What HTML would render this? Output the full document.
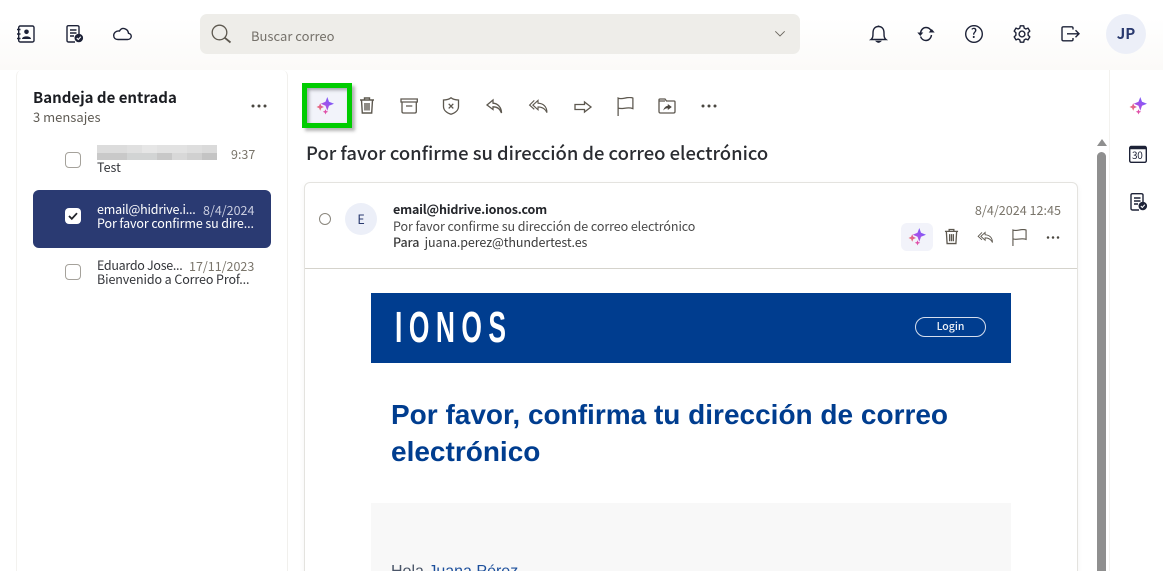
<!DOCTYPE html>
<html lang="es"><head><meta charset="utf-8"><title>Correo</title>
<style>
html,body{margin:0;padding:0;width:1163px;height:571px;overflow:hidden;background:#fff}
body{font-family:"Noto Sans CJK SC","Liberation Sans",sans-serif;color:#22242a;position:relative}
.a{position:absolute;white-space:nowrap;line-height:1}
svg{position:absolute;overflow:visible;fill:none}
.k{stroke:#1d2237;stroke-width:1.4}
.g{stroke:#5d584f;stroke-width:1.3}
.t{letter-spacing:-.1px}
</style></head><body>
<svg width="0" height="0" style="position:absolute"><defs>
<linearGradient id="sp" x1="0" y1="1" x2="1" y2="0"><stop offset="0" stop-color="#c94fd0"/><stop offset=".5" stop-color="#9a52ee"/><stop offset="1" stop-color="#5f62ff"/></linearGradient>
<linearGradient id="sq" x1="0" y1="1" x2="1" y2="0"><stop offset="0" stop-color="#ee7a6a"/><stop offset="1" stop-color="#d94fa8"/></linearGradient>
<symbol id="spark" viewBox="0 0 18 18"><path fill="url(#sp)" d="M11.300 0L13 4.700 18 6.800 13 8.800 11.300 13.800 9.500 8.800 4.700 6.800 9.500 4.700Z"/><path fill="url(#sq)" d="M4.200 6.300L5.300 8.800 8 10 5.300 11.100 4.200 13.800 3.100 11.100 .5 10 3.100 8.800Z"/><path fill="#e04fa8" d="M9.500 12.200L10.300 14 12.200 14.800 10.300 15.600 9.500 17.500 8.700 15.600 6.800 14.800 8.700 14Z"/></symbol>
<symbol id="trash" viewBox="0 0 16 18"><path d="M1 3.500H15M5.500 3.500V1.500H10.500V3.500M2.500 3.500L3.300 16.500H12.700L13.500 3.500M6 6.500V14M8 6.500V14M10 6.500V14" stroke="#5d584f" stroke-width="1.400" fill="none"/></symbol>
<symbol id="flag" viewBox="0 0 16 18"><path d="M1 18V1C5 3 10 -1 15 1V11C10 9 5 12 1 10.500" stroke="#5d584f" stroke-width="1.200" fill="none"/></symbol>
<symbol id="rall" viewBox="0 0 22 16"><path d="M6.500 1.500L1.500 6.500 6.500 11M10.500 1.500L5 6.500 10.500 11.500V8.500C15 8.500 18 10 20 14.500 20 8 16 4.700 10.500 4.500Z" stroke="#5d584f" stroke-width="1.200" fill="none"/></symbol>
</defs></svg>

<!-- top bar -->
<div class="a" style="left:0;top:0;width:1163px;height:70px;background:linear-gradient(#fff 25%,#fbfaf8)"></div>
<svg style="left:17px;top:25px" width="18" height="18" viewBox="0 0 18 18"><rect x="1.700" y="1" width="15.300" height="16" rx="1.500" class="k" stroke-width="1.600"/><circle cx="9.500" cy="6.800" r="2.300" fill="#1d2237"/><path d="M5 14C5 10.500 14 10.500 14 14Z" fill="#1d2237"/><path d="M0 4.500H3.500M0 9H3.500M0 13.500H3.500" stroke="#1d2237" stroke-width="1.500"/></svg>
<svg style="left:66px;top:25px" width="18" height="18" viewBox="0 0 18 18"><path d="M9 17H2.500Q1 17 1 15.500V2Q1 .7 2.500 .7H11Q13 .7 13 2V9" class="k"/><path d="M4 5H10.500M4 8H10.500M4 11H8" class="k"/><circle cx="12.800" cy="13" r="4.300" fill="#1d2237"/><path d="M10.800 13L12.300 14.500 14.800 11.800" stroke="#fff" stroke-width="1.100"/></svg>
<svg style="left:113px;top:26px" width="19" height="15" viewBox="0 0 19 15"><path d="M5 13.500H14.500C19 13.500 19.500 8 15.500 7.300 14.800 2.500 9 .5 6.500 5 3 4.500 .7 7 .7 9.500 .7 12 2.500 13.500 5 13.500Z" class="k" stroke-width="1.100"/></svg>
<div class="a" style="left:200px;top:14px;width:600px;height:40px;background:#eeede9;border-radius:7px"></div>
<svg style="left:211px;top:24px" width="20" height="20" viewBox="0 0 20 20"><circle cx="8.500" cy="8.500" r="7.300" stroke="#5d584f" stroke-width="1.300"/><path d="M13.800 13.800L19.500 18.500" stroke="#5d584f" stroke-width="1.800"/></svg>
<div class="a" style="left:251px;top:29px;font-size:13px;color:#75716a">Buscar correo</div>
<svg style="left:775px;top:31px" width="10" height="6" viewBox="0 0 10 6"><path d="M.3 .3L5 5 9.700 .3" stroke="#6b675f" stroke-width=".9"/></svg>
<svg style="left:870px;top:25px" width="17" height="19" viewBox="0 0 17 19"><path d="M1 14.500C3 13 3 11 3 8 3 4 5 1.500 8.500 1.500 12 1.500 14 4 14 8 14 11 14 13 16 14.500Z" class="k"/><path d="M8.500 .5V2" class="k"/><path d="M6.300 16.300Q8.500 18.500 10.700 16.300Z" fill="#1d2237" stroke="#1d2237"/></svg>
<svg style="left:917px;top:26px" width="18" height="16" viewBox="0 0 18 16"><path d="M3.500 7C4 3.500 6.500 1.500 9 1.500 11.500 1.500 13.500 3 14.500 5.500M14.500 9C14 12.500 11.500 14.500 9 14.500 6.500 14.500 4.500 13 3.500 10.500" class="k"/><path d="M0.300 6.500H6.300L3.300 10ZM11.700 6.500H17.700L14.700 3Z" fill="#1d2237"/></svg>
<svg style="left:965px;top:25px" width="18" height="18" viewBox="0 0 18 18"><circle cx="9" cy="9" r="8.300" class="k" stroke-width="1.200"/></svg>
<div class="a" style="left:970px;top:26px;width:8px;font-size:13px;font-weight:500;color:#1d2237;text-align:center">?</div>
<svg style="left:1013px;top:25px" width="18" height="18" viewBox="0 0 18 18"><path d="M7.300 .8H10.700L11.200 3.100 12.900 4 15 3.100 16.800 6.100 15.100 7.700V10.300L16.800 11.900 15 14.900 12.900 14 11.200 14.900 10.700 17.200H7.300L6.800 14.900 5.100 14 3 14.900 1.200 11.900 2.900 10.300V7.700L1.200 6.100 3 3.100 5.100 4 6.800 3.100Z" class="k" stroke-width="1.100" stroke-linejoin="round"/><circle cx="9" cy="9" r="2.900" class="k" stroke-width="1.100"/></svg>
<svg style="left:1061px;top:26px" width="19" height="16" viewBox="0 0 19 16"><path d="M12 3.500V2Q12 .8 10.500 .8H2.500Q1 .8 1 2V13.500Q1 14.800 2.500 14.800H10.500Q12 14.800 12 13.500V12M6 7.800H17.500M14.500 4.300L18 7.800 14.500 11.300" class="k" stroke-width="1.200"/></svg>
<div class="a" style="left:1106px;top:14px;width:40px;height:40px;border-radius:50%;background:#eceff8;color:#2a3a6f;font-size:15px;font-weight:700;line-height:39px;text-align:center">JP</div>

<!-- panels -->
<div class="a" style="left:0;top:70px;width:1163px;height:501px;background:#fff"></div>
<div class="a" style="left:16px;top:70px;width:272px;height:501px;background:#fff;border-left:1px solid #f3f2ef;border-right:1px solid #f1f0ed;border-radius:6px 6px 0 0;box-sizing:border-box"></div>
<div class="a" style="left:288px;top:70px;width:822px;height:501px;background:#fff;border-right:1px solid #f3f2ef;box-sizing:border-box"></div>

<!-- sidebar -->
<div class="a" style="left:33px;top:90px;font-size:15px;font-weight:700;color:#1b1d22">Bandeja de entrada</div>
<div class="a" style="left:33px;top:110px;font-size:13px;color:#5f5b54">3 mensajes</div>
<svg style="left:251px;top:103px" width="16" height="6" viewBox="0 0 16 6"><circle cx="2" cy="3" r="1.500" fill="#4a4740"/><circle cx="8" cy="3" r="1.500" fill="#4a4740"/><circle cx="14" cy="3" r="1.500" fill="#4a4740"/></svg>

<div class="a" style="left:65px;top:152px;width:16px;height:16px;border:1px solid #a5a29b;border-radius:4px;box-sizing:border-box"></div>
<div class="a" style="left:97px;top:145px;width:120px;height:8px;background:linear-gradient(90deg,#dcdcdc 0 30px,#e0e0e0 30px 45px,#e6e6e6 45px 60px,#e2e2e2 60px 90px,#dedede 90px 105px,#dadada 105px)"></div>
<div class="a" style="left:97px;top:153px;width:120px;height:7px;background:linear-gradient(90deg,#c9c9c9 0 30px,#d2d4d4 30px 60px,#c8c8c8 60px 75px,#d8d8d8 75px 90px,#d0d0d0 90px 105px,#c4c4c4 105px)"></div>
<div class="a" style="left:231px;top:148px;font-size:12.500px;color:#7a756b">9:37</div>
<div class="a" style="left:97px;top:161px;font-size:12.500px;color:#33353a">Test</div>

<div class="a" style="left:33px;top:190px;width:238px;height:58px;background:#2a3a72;border-radius:6px"></div>
<div class="a" style="left:65px;top:208px;width:16px;height:16px;background:#fff;border-radius:4px"></div>
<svg style="left:68px;top:212px" width="10" height="8" viewBox="0 0 10 8"><path d="M1 4L3.800 6.800 9 1.200" stroke="#22242a" stroke-width="1.800"/></svg>
<div class="a t" style="left:97px;top:203px;font-size:12.500px;color:#fff;letter-spacing:-.2px">email@hidrive.i...</div>
<div class="a" style="left:203px;top:204px;font-size:12.500px;color:#c9cde0">8/4/2024</div>
<div class="a t" style="left:97px;top:217px;font-size:12.500px;color:#fff">Por favor confirme su dire...</div>

<div class="a" style="left:65px;top:264px;width:16px;height:16px;border:1px solid #a5a29b;border-radius:4px;box-sizing:border-box"></div>
<div class="a t" style="left:97px;top:259px;font-size:12.500px;color:#33353a;letter-spacing:-.3px">Eduardo Jose...</div>
<div class="a" style="left:189px;top:260px;font-size:12.500px;color:#7a756b">17/11/2023</div>
<div class="a t" style="left:97px;top:273px;font-size:12.500px;color:#33353a">Bienvenido a Correo Prof...</div>

<!-- toolbar -->
<div class="a" style="left:302px;top:83px;width:50px;height:45px;background:#00cc00;box-shadow:3px 3px 3px rgba(90,90,90,.45)"></div>
<div class="a" style="left:307px;top:88px;width:40px;height:35px;background:#f2f3fa;box-shadow:inset 2px 2px 3px rgba(80,80,90,.5)"></div>
<svg style="left:316px;top:97px" width="18" height="18"><use href="#spark"/></svg>
<svg style="left:359px;top:96px" width="16" height="19"><use href="#trash"/></svg>
<svg style="left:400px;top:98px" width="18" height="16" viewBox="0 0 18 16"><path d="M1 1H17.300V4H1ZM2 4V13.500Q2 15 3.500 15H14.800Q16.300 15 16.300 13.500V4M6 8H12.300" class="g"/></svg>
<svg style="left:442px;top:97px" width="18" height="18" viewBox="0 0 18 18"><path d="M9 .8C11 2.500 13.500 3 16.500 3V9.500C16.500 13 13.500 15.800 9 17.200 4.500 15.800 1.500 13 1.500 9.500V3C4.500 3 7 2.500 9 .8Z" class="g" stroke-width="1.100"/><path d="M6.700 6.800L11.300 11.400M11.300 6.800L6.700 11.400" class="g" stroke-width="1.100"/></svg>
<svg style="left:486px;top:99px" width="17" height="15" viewBox="0 0 17 15"><path d="M7 1L1 6 7 10.500V7.800C11 7.800 14 9.500 15.500 14 15.500 8.500 12 4.500 7 4.200Z" class="g" stroke-width="1.200"/></svg>
<svg style="left:528px;top:99px" width="21" height="15"><use href="#rall"/></svg>
<svg style="left:574px;top:101px" width="18" height="12" viewBox="0 0 18 12"><path d="M1 3.500H10.500V1L17 6 10.500 11V8.500H1Z" class="g" stroke-width="1.200"/></svg>
<svg style="left:617px;top:97px" width="17" height="19"><use href="#flag"/></svg>
<svg style="left:658px;top:98px" width="18" height="16" viewBox="0 0 18 16"><path d="M1 13.500V2Q1 1 2 1H7L8.500 3H16Q17 3 17 4V13.500Q17 15 15.500 15H2.500Q1 15 1 13.500ZM1.500 3H7" class="g" stroke-width="1.200"/><path d="M9.800 6L13.800 9 9.800 12V10.300C8 10.300 6.500 11 5.300 12.500 5.800 10 7.500 8 9.800 7.700Z" fill="#4c4841"/></svg>
<svg style="left:701px;top:103px" width="16" height="6" viewBox="0 0 16 6"><circle cx="2" cy="3" r="1.500" fill="#4a4740"/><circle cx="8" cy="3" r="1.500" fill="#4a4740"/><circle cx="14" cy="3" r="1.500" fill="#4a4740"/></svg>

<div class="a" style="left:306px;top:144px;font-size:18.400px;font-weight:500;color:#2a2c31">Por favor confirme su dirección de correo electrónico</div>

<!-- message card -->
<div class="a" style="left:304px;top:182px;width:774px;height:400px;background:#fff;border:1px solid #e4e3df;border-radius:6px;box-sizing:border-box;box-shadow:0 2px 6px rgba(0,0,0,.05)"></div>
<div class="a" style="left:319px;top:213px;width:12px;height:12px;border:1px solid #8a867d;border-radius:50%;box-sizing:border-box"></div>
<div class="a" style="left:345px;top:203px;width:32px;height:32px;border-radius:50%;background:#eceff8;color:#2a3a6f;font-size:12.500px;line-height:32px;text-align:center">E</div>
<div class="a" style="left:393px;top:203px;font-size:12.500px;font-weight:700;color:#24262b;letter-spacing:-.18px">email@hidrive.ionos.com</div>
<div class="a" style="left:393px;top:220px;font-size:12.500px;color:#4a4a4a;letter-spacing:-.08px">Por favor confirme su dirección de correo electrónico</div>
<div class="a" style="left:393px;top:236px;font-size:12.500px;color:#3a3a3a;letter-spacing:-.1px"><span style="font-weight:500">Para</span>&nbsp; juana.perez@thundertest.es</div>
<div class="a" style="right:102px;top:204px;font-size:12.600px;color:#7a756b">8/4/2024 12:45</div>
<div class="a" style="left:901px;top:223px;width:32px;height:28px;background:#f2f3fa;border-radius:6px"></div>
<svg style="left:908px;top:228px" width="18" height="18"><use href="#spark"/></svg>
<svg style="left:944px;top:228px" width="15" height="17"><use href="#trash"/></svg>
<svg style="left:977px;top:231px" width="17" height="13" viewBox="0 0 22 16"><use href="#rall" width="22" height="16"/></svg>
<svg style="left:1012px;top:229px" width="15" height="17"><use href="#flag"/></svg>
<svg style="left:1046px;top:235px" width="14" height="5" viewBox="0 0 16 6"><circle cx="2" cy="3" r="1.500" fill="#4a4740"/><circle cx="8" cy="3" r="1.500" fill="#4a4740"/><circle cx="14" cy="3" r="1.500" fill="#4a4740"/></svg>
<div class="a" style="left:305px;top:268px;width:772px;height:1px;background:#d5d3cc"></div>

<!-- email -->
<div class="a" style="left:371px;top:293px;width:640px;height:70px;background:#003d8f"></div>
<div class="a" style="left:395px;top:306px;font-family:'Liberation Sans',sans-serif;font-weight:700;font-size:44px;line-height:44px;color:#fff;letter-spacing:10.800px;transform:scaleX(.6);transform-origin:0 0">IONOS</div>
<div class="a" style="left:915px;top:317px;width:71px;height:20px;border:1.500px solid #d5deee;border-radius:10px;box-sizing:border-box;color:#eef2f8;font-size:10.500px;font-weight:500;line-height:17px;text-align:center">Login</div>
<div class="a" style="left:391px;top:396px;font-family:'Liberation Sans',sans-serif;font-weight:700;font-size:28px;line-height:37px;color:#003d8f;white-space:normal;width:600px">Por favor, confirma tu dirección de correo electrónico</div>
<div class="a" style="left:371px;top:503px;width:640px;height:68px;background:#f8f8f8;overflow:hidden"><div class="a" style="left:20px;top:61px;font-family:'Liberation Sans',sans-serif;font-size:16px;color:#4a5568">Hola <span style="color:#1c4f9c">Juana Pérez</span>,</div></div>

<!-- scrollbar -->
<div class="a" style="left:1097px;top:139px;width:0;height:0;border-left:5px solid transparent;border-right:5px solid transparent;border-bottom:7px solid #8f8f8f"></div>
<div class="a" style="left:1097px;top:152px;width:9px;height:430px;background:#8f8f8f;border-radius:5px 5px 0 0"></div>

<!-- right rail -->
<svg style="left:1129px;top:97px" width="18" height="18"><use href="#spark"/></svg>
<svg style="left:1129px;top:145px" width="18" height="18" viewBox="0 0 18 18"><rect x=".7" y="1.500" width="16.600" height="15.800" rx="1.500" class="k" stroke-width="1.200"/><path d="M.7 1.500H17.300V4.300H.7Z" fill="#1d2237"/></svg>
<div class="a" style="left:1132px;top:150px;font-size:10px;color:#1d2237;letter-spacing:-.3px">30</div>
<svg style="left:1130px;top:193px" width="18" height="18" viewBox="0 0 18 18"><path d="M9 17H2.500Q1 17 1 15.500V2Q1 .7 2.500 .7H11Q13 .7 13 2V9" class="k"/><path d="M4 5H10.500M4 8H10.500M4 11H8" class="k"/><circle cx="12.800" cy="13" r="4.300" fill="#1d2237"/><path d="M10.800 13L12.300 14.500 14.800 11.800" stroke="#fff" stroke-width="1.100"/></svg>
</body></html>
